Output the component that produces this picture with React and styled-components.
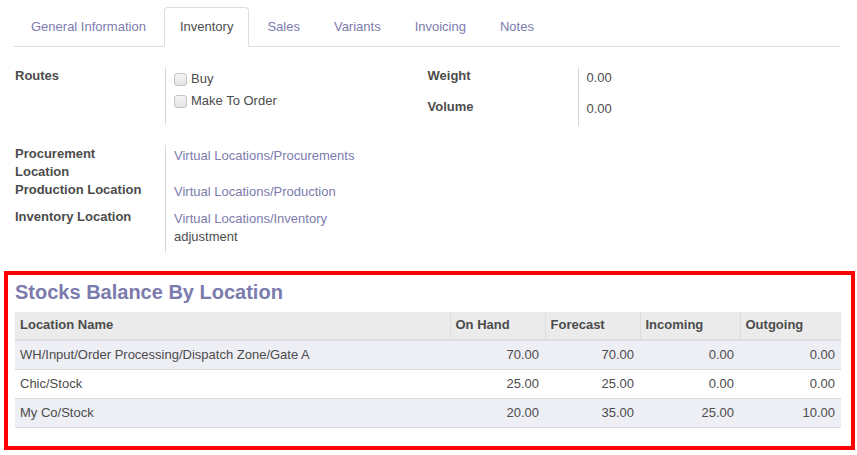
import React from 'react';
import styled, { createGlobalStyle } from 'styled-components';

const GlobalStyle = createGlobalStyle`
  body {
    margin: 0;
    background: #ffffff;
    font-family: "Liberation Sans", Arial, sans-serif;
    font-size: 13px;
    line-height: 18px;
    color: #4c4c4c;
  }
`;

const Page = styled.div`
  padding-top: 7px;
  width: 857px;
`;

const Inner = styled.div`
  margin: 0 17px 0 15px;
`;

const TabBar = styled.ul`
  display: flex;
  list-style: none;
  margin: 0 0 0 -1px;
  padding: 0;
  border-bottom: 1px solid #dddddd;
`;

const Tab = styled.li`
  margin-right: 2px;
  margin-bottom: -1px;
  padding: 10px 15px;
  border: 1px solid ${p => (p.$active ? '#dddddd' : 'transparent')};
  border-bottom-color: ${p => (p.$active ? '#ffffff' : 'transparent')};
  border-radius: 4px 4px 0 0;
  background: ${p => (p.$active ? '#ffffff' : 'transparent')};
  color: ${p => (p.$active ? '#4c4c4c' : '#7c7bad')};
  cursor: pointer;

  &:first-child {
    padding-left: 16px;
  }
`;

const FormGrid = styled.div`
  display: grid;
  grid-template-columns: 1fr 1fr;
  margin-top: ${p => p.$top}px;
`;

const Group = styled.div`
  display: grid;
  grid-template-columns: 150px 1fr;
  align-content: start;
`;

const Label = styled.div`
  padding-right: 16px;
  font-weight: bold;
  color: #4c4c4c;
`;

const Value = styled.div`
  border-left: 1px solid #d9d9d9;
  padding: ${p => p.$pad || '2px 0 7px 8px'};
`;

const Narrow = styled.div`
  max-width: 200px;
`;

const Link = styled.span`
  color: #7c7bad;
`;

const CheckRow = styled.label`
  display: flex;
  align-items: center;
  height: 22px;
`;

const Box = styled.span`
  width: 11px;
  height: 11px;
  margin-right: 4px;
  border: 1px solid #c4c4c4;
  border-radius: 3px;
  background: linear-gradient(#f4f4f4, #e4e4e4);
`;

const StockPanel = styled.section`
  margin: 18px 2px 0 4px;
  border: 4px solid #ff0000;
  padding: 5px 10px 18px 7px;
`;

const Title = styled.h2`
  margin: 0 0 8px;
  font-size: 20px;
  line-height: 24px;
  font-weight: bold;
  color: #7c7bad;
`;

const Table = styled.table`
  width: 100%;
  border-collapse: collapse;
  table-layout: fixed;
`;

const Th = styled.th`
  box-sizing: border-box;
  width: ${p => p.$w || 'auto'};
  padding: 4px 5px 5px;
  text-align: left;
  font-weight: bold;
  background: #ebebeb;
  border-bottom: 2px solid #dcdcdc;
  border-left: 1px solid #dedede;
  &:first-child {
    border-left: none;
  }
`;

const Row = styled.tr`
  background: ${p => (p.$striped ? '#eeeef5' : '#ffffff')};
  border-bottom: 1px solid #dddddd;
`;

const Td = styled.td`
  padding: 5px 6px 5px 5px;
  text-align: ${p => (p.$num ? 'right' : 'left')};
  color: #4c4c4c;
`;

const tabs = ['General Information', 'Inventory', 'Sales', 'Variants', 'Invoicing', 'Notes'];

const stock = [
  { name: 'WH/Input/Order Processing/Dispatch Zone/Gate A', values: ['70.00', '70.00', '0.00', '0.00'] },
  { name: 'Chic/Stock', values: ['25.00', '25.00', '0.00', '0.00'] },
  { name: 'My Co/Stock', values: ['20.00', '35.00', '25.00', '10.00'] },
];

export default function App() {
  return (
    <Page>
      <GlobalStyle />
      <Inner>
        <TabBar>
          {tabs.map(t => (
            <Tab key={t} $active={t === 'Inventory'}>{t}</Tab>
          ))}
        </TabBar>

        <FormGrid $top={20}>
          <Group>
            <Label>Routes</Label>
            <Value $pad="1px 0 13px 8px">
              <CheckRow><Box />Buy</CheckRow>
              <CheckRow><Box />Make To Order</CheckRow>
            </Value>
          </Group>
          <Group>
            <Label>Weight</Label>
            <Value $pad="2px 0 11px 8px">0.00</Value>
            <Label>Volume</Label>
            <Value $pad="2px 0 8px 8px">0.00</Value>
          </Group>
        </FormGrid>

        <FormGrid $top={19}>
          <Group>
            <Label>Procurement Location</Label>
            <Value><Link>Virtual Locations/Procurements</Link></Value>
            <Label>Production Location</Label>
            <Value><Link>Virtual Locations/Production</Link></Value>
            <Label>Inventory Location</Label>
            <Value>
              <Narrow><Link>Virtual Locations/Inventory</Link> adjustment</Narrow>
            </Value>
          </Group>
        </FormGrid>
      </Inner>

      <StockPanel>
        <Title>Stocks Balance By Location</Title>
        <Table>
          <thead>
            <tr>
              <Th>Location Name</Th>
              <Th $w="95px">On Hand</Th>
              <Th $w="95px">Forecast</Th>
              <Th $w="100px">Incoming</Th>
              <Th $w="101px">Outgoing</Th>
            </tr>
          </thead>
          <tbody>
            {stock.map((s, i) => (
              <Row key={s.name} $striped={i % 2 === 0}>
                <Td>{s.name}</Td>
                {s.values.map((v, j) => (
                  <Td key={j} $num>{v}</Td>
                ))}
              </Row>
            ))}
          </tbody>
        </Table>
      </StockPanel>
    </Page>
  );
}
